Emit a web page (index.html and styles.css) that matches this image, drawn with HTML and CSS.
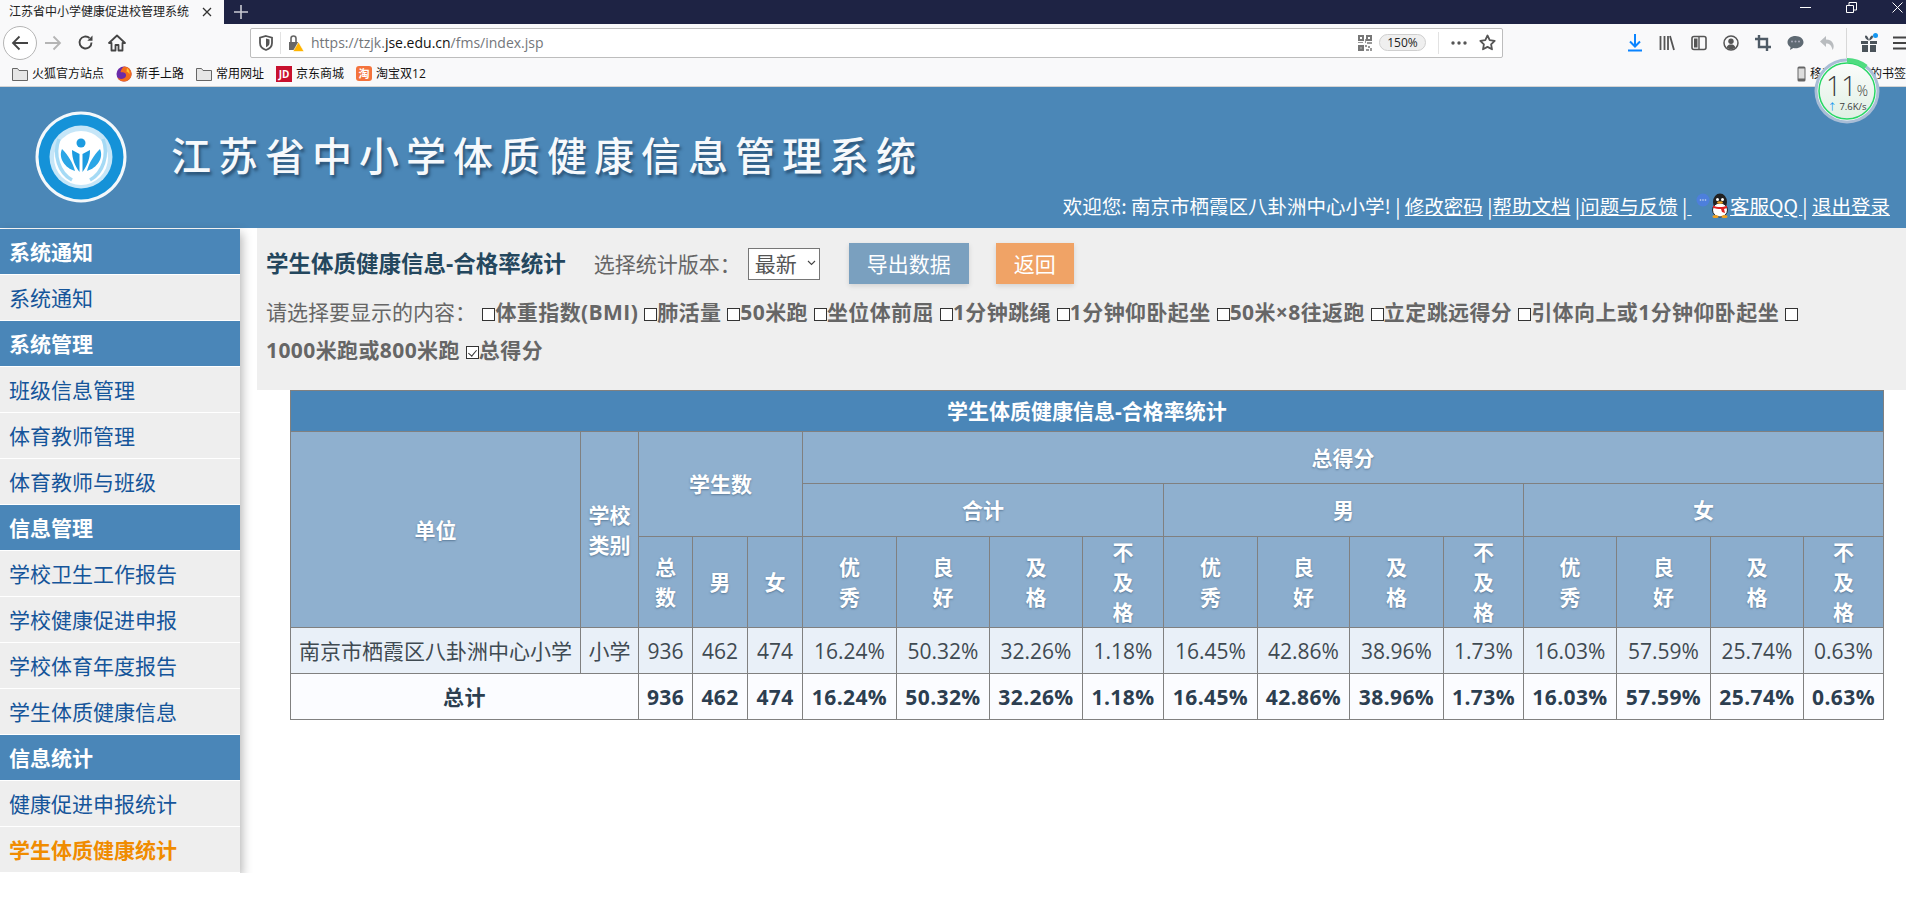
FILE: index.html
```html
<!DOCTYPE html>
<html lang="zh-CN">

<head>
  <meta charset="UTF-8" />
  <title>江苏省中小学体质健康信息管理系统</title>
  <link rel="stylesheet" href="styles.css">
</head>

<body>

  <div class="tabbar">
    <div class="tab">
      <span class="tab-title">江苏省中小学健康促进校管理系统</span>
      <svg class="tab-close" width="10" height="10" viewBox="0 0 10 10"><path d="M1 1l8 8M9 1l-8 8" stroke="#333" stroke-width="1.3"/></svg>
    </div>
    <svg class="tab-new" width="14" height="14" viewBox="0 0 14 14"><path d="M7 0v14M0 7h14" stroke="#c9cad3" stroke-width="1.6"/></svg>
    <div class="win-controls">
      <svg width="11" height="11" viewBox="0 0 11 11"><path d="M0 5.5h11" stroke="#fff"/></svg>
      <svg width="11" height="11" viewBox="0 0 11 11"><path d="M.5 3.5h7v7h-7zM3 3V.5h7.5V8H8" fill="none" stroke="#fff"/></svg>
      <svg width="11" height="11" viewBox="0 0 11 11"><path d="M.5.5l10 10M10.5.5l-10 10" stroke="#fff"/></svg>
    </div>
  </div>

  <div class="toolbar">
    <span class="back-btn">
      <svg width="18" height="18" viewBox="0 0 18 18"><path d="M2 9h15M8.5 2.5L2 9l6.5 6.5" fill="none" stroke="#444" stroke-width="1.8"/></svg>
    </span>
    <span class="tool-btn">
      <svg width="18" height="18" viewBox="0 0 18 18"><path d="M1 9h15M9.5 2.5L16 9l-6.5 6.5" fill="none" stroke="#b5b5b5" stroke-width="1.8"/></svg>
    </span>
    <span class="tool-btn">
      <svg width="17" height="17" viewBox="0 0 17 17"><path d="M14.5 8.5a6 6 0 1 1-2-4.5" fill="none" stroke="#444" stroke-width="1.9"/><path d="M15.5 1.5v5.2h-5.2z" fill="#444"/></svg>
    </span>
    <span class="tool-btn">
      <svg width="18" height="18" viewBox="0 0 18 18"><path d="M9 1.5L1 9h2.5v7.5h4V11h3v5.5h4V9H17z" fill="none" stroke="#444" stroke-width="1.8" stroke-linejoin="round"/></svg>
    </span>

    <div class="urlbar">
      <svg class="url-shield" width="14" height="16" viewBox="0 0 14 16"><path d="M7 1l6 1.6V8c0 3.5-2.6 5.8-6 7-3.4-1.2-6-3.5-6-7V2.600z" fill="none" stroke="#555" stroke-width="1.800"/><path d="M7 3.500l3.500.9V8c0 2-1.500 3.400-3.500 4.300z" fill="#555"/></svg>
      <span class="url-divider"></span>
      <svg class="url-lock" width="16" height="18" viewBox="0 0 16 18"><path d="M1 8h9v8H1z" fill="#666"/><path d="M3 8V4.500a2.500 2.500 0 0 1 5 0V8" fill="none" stroke="#666" stroke-width="1.600"/><path d="M10.500 8l5.500 9.500H5z" fill="#ffb400" stroke="#fff" stroke-width=".6"/></svg>
      <span class="url-text">https://tzjk.<b>jse.edu.cn</b>/fms/index.jsp</span>
      <svg class="url-qr" width="14" height="16" viewBox="0 0 14 16"><path d="M0 0h6v6H0zM8 0h6v6H8zM0 10h6v6H0zM2 2h2v2H2zM10 2h2v2h-2z" fill="#777" fill-rule="evenodd"/><path d="M7 4h1v4H7zM0 7h5v1H0zM9 7h5v2H9zM7 10h2v2H7zM10 11h2v2h-2zM12 13h2v3h-2zM8 14h3v2H8zM2 12h2v2H2z" fill="#999"/></svg>
      <span class="zoom-pill">150%</span>
      <span class="url-divider url-divider-right"></span>
      <svg class="url-dots" width="16" height="4" viewBox="0 0 16 4"><circle cx="2" cy="2" r="1.700" fill="#555"/><circle cx="8" cy="2" r="1.700" fill="#555"/><circle cx="14" cy="2" r="1.700" fill="#555"/></svg>
      <svg class="url-star" width="17" height="17" viewBox="0 0 17 17"><path d="M8.500 1.500l2.200 4.600 5 .7-3.600 3.500.9 5-4.500-2.400L4 15.300l.9-5L1.300 6.800l5-.7z" fill="none" stroke="#555" stroke-width="1.800" stroke-linejoin="round"/></svg>
    </div>

    <div class="tool-group">
      <span class="tool-btn">
        <svg width="14" height="18" viewBox="0 0 14 18"><path d="M7 0v12M2 7.500L7 12.500l5-5M0 16.500h14" fill="none" stroke="#0a84ff" stroke-width="2"/></svg>
      </span>
      <span class="tool-btn">
        <svg width="16" height="16" viewBox="0 0 16 16"><path d="M1.500 1v14M5.500 1v14M9 1v14M11 1l4 14" fill="none" stroke="#555" stroke-width="1.800"/></svg>
      </span>
      <span class="tool-btn">
        <svg width="16" height="16" viewBox="0 0 16 16"><rect x="1" y="1.500" width="14" height="13" rx="2" fill="none" stroke="#555" stroke-width="1.600"/><path d="M3 3.500h3.500v9H3z" fill="#555"/><path d="M8 2v12" stroke="#555" stroke-width="1.400"/></svg>
      </span>
      <span class="tool-btn">
        <svg width="16" height="16" viewBox="0 0 16 16"><circle cx="8" cy="8" r="7" fill="none" stroke="#555" stroke-width="1.500"/><circle cx="8" cy="6.300" r="2.700" fill="#555"/><path d="M3.500 12.500c1-2.500 2.700-3 4.500-3s3.500.5 4.500 3A6 6 0 0 1 8 14.300a6 6 0 0 1-4.500-1.800z" fill="#555"/></svg>
      </span>
      <span class="tool-btn">
        <svg width="16" height="16" viewBox="0 0 16 16"><path d="M4 0v12h12M0 4h12v12" fill="none" stroke="#4f5b66" stroke-width="2.400"/></svg>
      </span>
      <span class="tool-btn">
        <svg width="17" height="16" viewBox="0 0 17 16"><path d="M8.500 1C4 1 .5 3.700.5 7.200c0 2 1.200 3.800 3 4.900L3 15l3.400-2c.7.1 1.400.2 2.100.2 4.500 0 8-2.700 8-6S13 1 8.500 1z" fill="#5f6a73"/><circle cx="5" cy="6.500" r="1" fill="#aab"/><circle cx="8.500" cy="6.500" r="1" fill="#aab"/><circle cx="12" cy="6.500" r="1" fill="#aab"/></svg>
      </span>
      <span class="tool-btn">
        <svg width="16" height="16" viewBox="0 0 16 16"><path d="M7 1L1 6.500 7 12V8.500c3.500 0 5.500 1.500 6.500 6.500 1.500-2 1.500-4.500.5-6.500C13 6 10.500 4.600 7 4.600z" fill="#b9bcbf"/></svg>
      </span>
      <span class="tool-sep"></span>
      <span class="tool-btn">
        <svg width="18" height="20" viewBox="0 0 18 20"><path d="M1 8h7v3H1zM10 8h7v3h-7zM2 12h6v7H2zM10 12h6v7h-6zM5 3.500C5 1.500 8 2 9 7.500 10 2 13 1.500 13 3.500 13 5.500 11 7 9 7.500 7 7 5 5.500 5 3.500z" fill="#4b535a"/><circle cx="15.500" cy="2.500" r="2.500" fill="#1596f0"/></svg>
      </span>
      <span class="tool-btn">
        <svg width="16" height="14" viewBox="0 0 16 14"><path d="M0 1.500h16M0 7h16M0 12.500h16" stroke="#444" stroke-width="1.800"/></svg>
      </span>
    </div>
  </div>

  <div class="bookmarks">
    <span class="bookmark">
      <svg width="16" height="14" viewBox="0 0 16 14"><path d="M.5 13.500V1.500h5l1.500 2h8.500v10z" fill="#e6e6e6" stroke="#666"/></svg>
      火狐官方站点
    </span>
    <span class="bookmark">
      <svg width="16" height="16" viewBox="0 0 16 16"><circle cx="8" cy="8" r="7.500" fill="#6a2ba8"/><path d="M8 .5a7.500 7.500 0 0 1 7 10.500c-1 2.500-3.800 4.500-7 4.500-3 0-5.500-1.500-6.800-4C3 13 6 13.500 8.500 12c2-1.300 2-4 .5-5C7.500 6 5.800 6.800 4.500 6 5 3.500 6.500 1.500 8 .5z" fill="#f26b1d"/><path d="M11 2c2 1.500 3 4 2.500 6.500-.5-1.500-1.500-2.500-3-3z" fill="#ffc42e"/></svg>
      新手上路
    </span>
    <span class="bookmark">
      <svg width="16" height="14" viewBox="0 0 16 14"><path d="M.5 13.500V1.500h5l1.500 2h8.500v10z" fill="#e6e6e6" stroke="#666"/></svg>
      常用网址
    </span>
    <span class="bookmark">
      <span class="jd-icon">JD</span>
      京东商城
    </span>
    <span class="bookmark">
      <span class="tao-icon">淘</span>
      淘宝双12
    </span>
    <span class="bookmark mobile-bookmark">
      <svg width="9" height="16" viewBox="0 0 9 16"><rect x=".5" y=".5" width="8" height="15" rx="1.500" fill="#666"/><path d="M1.500 2.500h6v10h-6z" fill="#ddd"/></svg>
      移动设备上的书签
    </span>
  </div>

  <div class="speed-ball">
    <svg class="speed-ring" width="66" height="67" viewBox="0 0 66 67">
      <defs>
        <linearGradient id="ballFill" x1="0" y1="0" x2="0" y2="1">
          <stop offset="0" stop-color="#fbfcfb"/>
          <stop offset="1" stop-color="#dff0e4"/>
        </linearGradient>
      </defs>
      <circle cx="33" cy="34" r="32.500" fill="#a9bdd6"/>
      <circle cx="33" cy="34" r="29.500" fill="#fff"/>
      <circle cx="33" cy="34" r="28" fill="url(#ballFill)" stroke="#27d665" stroke-width="1.500"/>
      <path d="M33 3.500a30.500 30.500 0 0 1 19 6.500" fill="none" stroke="#4fdc80" stroke-width="5"/>
    </svg>
    <span class="speed-value">11<small>%</small></span>
    <span class="speed-rate"><i>↑</i> 7.6K/s</span>
  </div>

  <header class="site-header">
    <div class="brand">
      <svg class="logo" width="92" height="92" viewBox="0 0 92 92">
        <circle cx="46" cy="46" r="45.500" fill="#f4f8fb"/>
        <circle cx="46" cy="46" r="42.500" fill="#1592d8"/>
        <circle cx="46" cy="46" r="31.500" fill="#c6e6f8"/>
        <circle cx="46" cy="47" r="27" fill="#fff"/>
        <path d="M24 28c-6 16 0 34 13 41M68 28c6 16 0 34-13 41" fill="none" stroke="#a5daf5" stroke-width="3.500"/>
        <circle cx="46" cy="32" r="4.500" fill="#1c9be0"/>
        <path d="M37 39l7.500 4v18c-4.500-6-7.500-13-7.500-22zM55 39l-7.500 4v18c4.500-6 7.500-13 7.500-22z" fill="#1c9be0"/>
        <path d="M27 38c-4 9 3 19 13 22-2-8-7-16-13-22zM65 38c4 9-3 19-13 22 2-8 7-16 13-22z" fill="#2ba6e6"/>
      </svg>
      <h1 class="brand-title">江苏省中小学体质健康信息管理系统</h1>
    </div>
    <div class="user-bar">
      欢迎您: 南京市栖霞区八卦洲中心小学! | <a href="#">修改密码</a> |<a href="#">帮助文档</a> |<a href="#">问题与反馈</a> |<a href="#">&nbsp;</a>
      <svg class="qq-icon" width="34" height="25" viewBox="0 0 34 25">
        <circle cx="7" cy="7" r="6.500" fill="#4d7fdc"/>
        <circle cx="4.500" cy="7" r=".8" fill="#cde"/><circle cx="7" cy="7" r=".8" fill="#cde"/><circle cx="9.500" cy="7" r=".8" fill="#cde"/>
        <ellipse cx="24" cy="9" rx="7" ry="8.500" fill="#222"/>
        <ellipse cx="24" cy="17" rx="7.500" ry="7" fill="#fff" stroke="#222" stroke-width="1"/>
        <circle cx="21.500" cy="6.500" r="1.500" fill="#fff"/><circle cx="26.500" cy="6.500" r="1.500" fill="#fff"/>
        <ellipse cx="24" cy="9.500" rx="3" ry="1.300" fill="#f0a020"/>
        <path d="M17 12.500c4 2 10 2 14 0v2.500c-1 .5-2 .8-3 1l1 4-3-1-1-3c-3 0-6-.5-8-1z" fill="#e02020"/>
        <ellipse cx="19.500" cy="23.500" rx="3" ry="1.500" fill="#f0a020"/><ellipse cx="28.500" cy="23.500" rx="3" ry="1.500" fill="#f0a020"/>
      </svg><a href="#">客服QQ&nbsp;</a>| <a href="#">退出登录</a>
    </div>
  </header>

  <div class="layout">
    <aside class="sidebar">
      <div class="menu-head">系统通知</div>
      <a class="menu-item" href="#">系统通知</a>
      <div class="menu-head">系统管理</div>
      <a class="menu-item" href="#">班级信息管理</a>
      <a class="menu-item" href="#">体育教师管理</a>
      <a class="menu-item" href="#">体育教师与班级</a>
      <div class="menu-head">信息管理</div>
      <a class="menu-item" href="#">学校卫生工作报告</a>
      <a class="menu-item" href="#">学校健康促进申报</a>
      <a class="menu-item" href="#">学校体育年度报告</a>
      <a class="menu-item" href="#">学生体质健康信息</a>
      <div class="menu-head">信息统计</div>
      <a class="menu-item" href="#">健康促进申报统计</a>
      <a class="menu-item active" href="#">学生体质健康统计</a>
    </aside>

    <main class="content">
      <section class="filter-panel">
        <div class="filter-top">
          <h2>学生体质健康信息-合格率统计</h2>
          <span class="version-label">选择统计版本：</span>
          <span class="version-select">
            <select>
              <option>最新</option>
            </select>
            <svg class="chevron" width="9" height="6" viewBox="0 0 9 6"><path d="M1 1l3.500 3.500L8 1" fill="none" stroke="#444" stroke-width="1.100"/></svg>
          </span>
          <button class="btn export-btn">导出数据</button>
          <button class="btn back-link">返回</button>
        </div>
        <div class="filter-options">
          <span class="options-label">请选择要显示的内容：</span>
          <input type="checkbox"><span class="opt">体重指数(BMI)</span>
          <input type="checkbox"><span class="opt">肺活量</span>
          <input type="checkbox"><span class="opt">50米跑</span>
          <input type="checkbox"><span class="opt">坐位体前屈</span>
          <input type="checkbox"><span class="opt">1分钟跳绳</span>
          <input type="checkbox"><span class="opt">1分钟仰卧起坐</span>
          <input type="checkbox"><span class="opt">50米×8往返跑</span>
          <input type="checkbox"><span class="opt">立定跳远得分</span>
          <input type="checkbox"><span class="opt">引体向上或1分钟仰卧起坐</span>
          <input type="checkbox"><span class="opt">1000米跑或800米跑</span>
          <input type="checkbox" checked><span class="opt">总得分</span>
        </div>
      </section>

      <table class="stats-table">
        <colgroup>
          <col class="w-unit"><col class="w-type"><col class="w-sm"><col class="w-md"><col class="w-md">
          <col class="w-94"><col class="w-93"><col class="w-93"><col class="w-81">
          <col class="w-94"><col class="w-92"><col class="w-94"><col class="w-80">
          <col class="w-93"><col class="w-94"><col class="w-93"><col class="w-80">
        </colgroup>
        <thead>
          <tr class="row-title">
            <th colspan="17">学生体质健康信息-合格率统计</th>
          </tr>
          <tr class="row-group">
            <th rowspan="3">单位</th>
            <th rowspan="3">学校<br>类别</th>
            <th colspan="3" rowspan="2">学生数</th>
            <th colspan="12">总得分</th>
          </tr>
          <tr class="row-group row-sub">
            <th colspan="4">合计</th>
            <th colspan="4">男</th>
            <th colspan="4">女</th>
          </tr>
          <tr class="row-cols">
            <th>总<br>数</th><th>男</th><th>女</th>
            <th>优<br>秀</th><th>良<br>好</th><th>及<br>格</th><th>不<br>及<br>格</th>
            <th>优<br>秀</th><th>良<br>好</th><th>及<br>格</th><th>不<br>及<br>格</th>
            <th>优<br>秀</th><th>良<br>好</th><th>及<br>格</th><th>不<br>及<br>格</th>
          </tr>
        </thead>
        <tbody>
          <tr class="row-data">
            <td>南京市栖霞区八卦洲中心小学</td><td>小学</td>
            <td>936</td><td>462</td><td>474</td>
            <td>16.24%</td><td>50.32%</td><td>32.26%</td><td>1.18%</td>
            <td>16.45%</td><td>42.86%</td><td>38.96%</td><td>1.73%</td>
            <td>16.03%</td><td>57.59%</td><td>25.74%</td><td>0.63%</td>
          </tr>
          <tr class="row-total">
            <td colspan="2">总计</td>
            <td>936</td><td>462</td><td>474</td>
            <td>16.24%</td><td>50.32%</td><td>32.26%</td><td>1.18%</td>
            <td>16.45%</td><td>42.86%</td><td>38.96%</td><td>1.73%</td>
            <td>16.03%</td><td>57.59%</td><td>25.74%</td><td>0.63%</td>
          </tr>
        </tbody>
      </table>
    </main>
  </div>

</body>

</html>
```

FILE: styles.css
```css
* {
  box-sizing: border-box;
}

body {
  margin: 0;
  background: #fff;
  font-family: "Open Sans", "Noto Sans CJK SC", sans-serif;
  font-size: 21px;
  line-height: 30px;
  color: #666;
  overflow: hidden;
}

a {
  color: inherit;
}

/* browser chrome */

.tabbar {
  height: 24px;
  background: #1e2344;
  display: flex;
  align-items: center;
}

.tab {
  width: 224px;
  height: 24px;
  background: #f9f9fa;
  display: flex;
  align-items: center;
  padding-left: 9px;
}

.tab-title {
  width: 193px;
  font-size: 12px;
  line-height: 16px;
  color: #222;
}

.tab-new {
  margin-left: 10px;
}

.win-controls {
  margin-left: auto;
  margin-right: 3px;
  width: 103px;
  display: flex;
  gap: 35px;
  align-items: center;
  padding-bottom: 10px;
}

.toolbar {
  height: 37px;
  background: #f9f9fa;
  display: flex;
  align-items: center;
  padding-left: 3px;
  overflow: hidden;
}

.back-btn {
  width: 34px;
  height: 34px;
  flex: none;
  border: 1px solid #b5b5b5;
  border-radius: 50%;
  background: #fff;
  display: flex;
  align-items: center;
  justify-content: center;
}

.tool-btn {
  width: 32px;
  flex: none;
  display: flex;
  align-items: center;
  justify-content: center;
}

.urlbar {
  width: 1253px;
  height: 30px;
  margin-left: 117px;
  flex: none;
  background: #fff;
  border: 1px solid #bdbdbd;
  border-radius: 2px;
  display: flex;
  align-items: center;
}

.url-shield {
  margin-left: 8px;
  flex: none;
}

.url-divider {
  width: 1px;
  height: 22px;
  background: #e2e2e2;
  margin-left: 7px;
}

.url-lock {
  margin-left: 7px;
  flex: none;
}

.url-text {
  margin-left: 7px;
  font-size: 14px;
  line-height: 20px;
  color: #73767a;
}

.url-text b {
  font-weight: 400;
  color: #111;
}

.url-qr {
  margin-left: auto;
}

.zoom-pill {
  margin-left: 7px;
  width: 47px;
  height: 17px;
  border: 1px solid #cfcfcf;
  border-radius: 9px;
  background: #efefef;
  font-size: 12px;
  line-height: 15px;
  color: #222;
  text-align: center;
}

.url-divider-right {
  margin-left: 12px;
}

.url-dots {
  margin-left: 12px;
}

.url-star {
  margin-left: 12px;
  margin-right: 6px;
}

.tool-group {
  margin-left: 116px;
  display: flex;
  align-items: center;
  flex: none;
}

.tool-sep {
  width: 1px;
  height: 30px;
  margin: 0 6px 0 3px;
  background: #d8d8d8;
}

.bookmarks {
  height: 26px;
  background: #f9f9fa;
  border-bottom: 1px solid #d4d4d4;
  display: flex;
  align-items: center;
  padding-left: 12px;
  gap: 12px;
  font-size: 12px;
  line-height: 16px;
  color: #111;
  overflow: hidden;
}

.bookmark {
  display: flex;
  align-items: center;
  gap: 4px;
  flex: none;
}

.mobile-bookmark {
  margin-left: auto;
}

.jd-icon {
  width: 16px;
  height: 16px;
  background: #c8102e;
  color: #fff;
  font-size: 10px;
  line-height: 16px;
  font-weight: 700;
  text-align: center;
}

.tao-icon {
  width: 16px;
  height: 15px;
  border-radius: 3px;
  background: #f4733c;
  color: #fff;
  font-size: 11px;
  line-height: 15px;
  font-weight: 700;
  text-align: center;
}

/* floating network meter */

.speed-ball {
  position: absolute;
  left: 1814px;
  top: 57px;
  width: 66px;
  height: 67px;
  z-index: 5;
  text-align: center;
  color: #3a3a3a;
}

.speed-ring {
  position: absolute;
  left: 0;
  top: 0;
}

.speed-value {
  position: absolute;
  left: 0;
  right: 0;
  top: 14px;
  font-size: 27px;
  line-height: 30px;
  font-weight: 300;
}

.speed-value small {
  font-size: 14px;
}

.speed-rate {
  position: absolute;
  left: 0;
  right: 0;
  top: 43px;
  font-size: 9.5px;
  line-height: 14px;
}

.speed-rate i {
  font-style: normal;
  color: #1596f0;
}

/* page header */

.site-header {
  height: 141px;
  background: #4b87b7;
  display: grid;
}

.brand,
.user-bar {
  grid-area: 1 / 1;
}

.brand {
  display: flex;
  align-items: center;
  align-self: start;
  padding: 24px 0 0 35px;
}

.brand-title {
  margin: 0 0 3px 44px;
  font-size: 40px;
  line-height: 46px;
  font-weight: 500;
  letter-spacing: 7px;
  color: #f6f9fc;
  text-shadow: 2px 3px 3px rgba(25, 55, 85, 0.65);
}

.user-bar {
  align-self: end;
  justify-self: end;
  padding: 0 16px 7px 0;
  font-family: "Noto Sans CJK SC", sans-serif;
  font-size: 19.5px;
  color: #fff;
  white-space: nowrap;
}

.qq-icon {
  vertical-align: -4px;
}

/* layout */

.layout {
  display: flex;
  align-items: flex-start;
}

.sidebar {
  width: 240px;
  margin-top: 1px;
  flex: none;
  background: #eee;
  box-shadow: 2px 4px 10px rgba(0, 0, 0, 0.3);
}

.menu-head,
.menu-item {
  display: block;
  height: 46px;
  padding: 8px 0 0 9px;
  border-bottom: 1px solid #fff;
}

.menu-head {
  background: #4a86b8;
  color: #fff;
  font-weight: 700;
}

.menu-item {
  color: #15559a;
  text-decoration: none;
}

.menu-item.active {
  color: #f08c00;
  font-weight: 700;
}

.content {
  flex: 1;
  padding-left: 17px;
}

/* filter panel */

.filter-panel {
  height: 162px;
  padding: 15px 0 0 9px;
  background: #efefef;
}

.filter-top {
  display: flex;
  align-items: center;
  height: 41px;
}

.filter-top h2 {
  margin: 0;
  font-size: 22.5px;
  line-height: 30px;
  font-weight: 700;
  color: #24475e;
}

.version-label {
  margin-left: 28px;
}

.version-select {
  position: relative;
  margin-left: 7px;
}

.version-select select {
  appearance: none;
  display: block;
  width: 72px;
  height: 32px;
  padding: 0 0 0 6px;
  border: 1px solid #767676;
  border-radius: 0;
  background: #fff;
  font: inherit;
  color: #555;
}

.chevron {
  position: absolute;
  right: 4px;
  top: 12px;
}

.btn {
  height: 41px;
  padding: 0 18px;
  border: 0;
  font: inherit;
  color: #fff;
  box-shadow: 0 2px 5px rgba(0, 0, 0, 0.12);
}

.export-btn {
  margin-left: 29px;
  background: #7aa0bf;
}

.back-link {
  margin-left: 27px;
  background: #f0a366;
}

.filter-options {
  margin-top: 9px;
  line-height: 38px;
}

.options-label {
  margin-right: 1px;
}

.opt {
  margin-right: 0.500px;
  font-weight: 700;
  letter-spacing: 0.400px;
  white-space: nowrap;
}

.filter-options input {
  appearance: none;
  display: inline-block;
  width: 13px;
  height: 13px;
  margin: 0;
  border: 1px solid #333;
  background: #fff;
  vertical-align: -1px;
  position: relative;
}

.filter-options input:checked::after {
  content: "";
  position: absolute;
  left: 3px;
  top: 1px;
  width: 4px;
  height: 7px;
  border: solid #333;
  border-width: 0 1px 1px 0;
  transform: rotate(40deg);
}

/* table */

.stats-table {
  width: 1593px;
  margin-left: 33px;
  border-collapse: collapse;
  table-layout: fixed;
  text-align: center;
}

.stats-table th,
.stats-table td {
  border: 1px solid #808080;
  padding: 0;
}

.w-unit { width: 290px; }
.w-type { width: 58px; }
.w-sm { width: 54px; }
.w-md { width: 55px; }
.w-94 { width: 94px; }
.w-93 { width: 93px; }
.w-92 { width: 92px; }
.w-81 { width: 81px; }
.w-80 { width: 80px; }

.stats-table th {
  color: #fff;
  font-weight: 700;
  background: #8fb0cf;
  text-shadow: 0 1px 2px rgba(40, 70, 100, 0.5);
}

.row-title {
  height: 41px;
}

.stats-table .row-title th {
  background: #4a86b8;
  text-shadow: none;
}

.row-group {
  height: 52px;
}

.row-sub {
  height: 53px;
}

.row-cols {
  height: 91px;
}

.stats-table .row-cols th {
  background: #8badcd;
}

.row-data,
.row-total {
  height: 46px;
}

.row-data td {
  background: #e9f0f8;
  color: #3f4a52;
}

.row-total td {
  background: #fbfcff;
  color: #2c3e50;
  font-weight: 700;
  letter-spacing: 0.400px;
}
```
